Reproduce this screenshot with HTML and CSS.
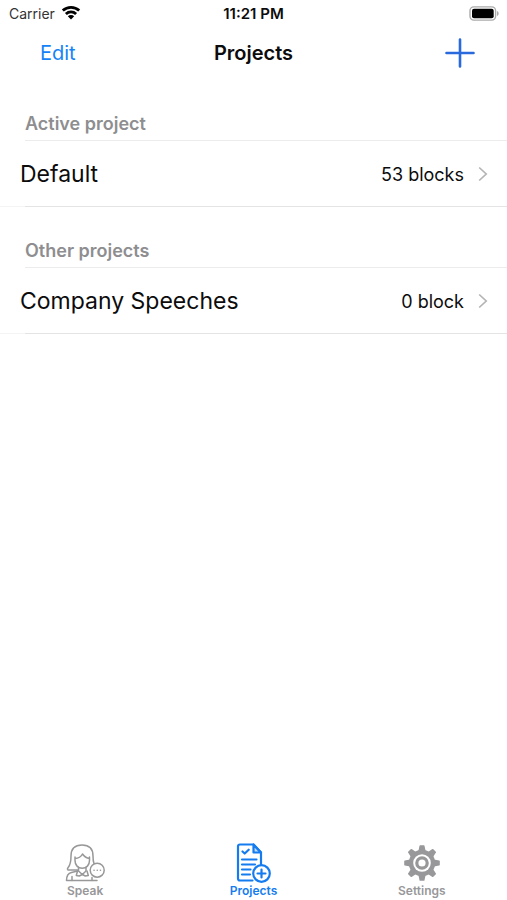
FILE: index.html
```html
<!DOCTYPE html>
<html lang="en">
<head>
<meta charset="utf-8">
<meta name="viewport" content="width=device-width, initial-scale=1">
<title>Projects</title>
<link rel="stylesheet" href="styles.css">
</head>
<body>
<div class="status">
  <div class="carrier">
    <span>Carrier</span>
    <svg width="20" height="15" viewBox="0 0 20 15" fill="none" stroke="#000" stroke-width="2.800" aria-hidden="true">
      <path d="M1.800 5.600a11.800 11.800 0 0 1 16.400 0M4.900 9a7.400 7.400 0 0 1 10.200 0"/>
      <path d="M10 14.500 6.800 11.300a4.500 4.500 0 0 1 6.400 0z" fill="#000" stroke="none"/>
    </svg>
  </div>
  <time class="clock">11:21 PM</time>
  <svg class="battery" width="30" height="15" viewBox="1 0 30 15" aria-hidden="true">
    <rect x="2" y=".9" width="25.600" height="13.200" rx="3.800" fill="#fff" stroke="#aaa" stroke-width="1.400"/>
    <rect x="4" y="2.800" width="21.700" height="9.400" rx="2" fill="#000"/>
    <path d="M29 5v5c2.200-.8 2.200-4.200 0-5z" fill="#aaa"/>
  </svg>
</div>
<header class="nav">
  <button class="edit" type="button">Edit</button>
  <h1>Projects</h1>
  <button class="add" type="button" aria-label="Add project">
    <svg width="30" height="30" viewBox="0 0 30 30" fill="none" stroke="#2869de" stroke-width="2.600" stroke-linecap="round"><path d="M15 1.500v27M1.500 15h27"/></svg>
  </button>
</header>
<main>
  <section>
    <h2>Active project</h2>
    <a class="row" href="#default">
      <span class="name">Default</span>
      <span class="count">53 blocks</span>
      <svg width="10" height="16" viewBox="0 0 10 16" fill="none" stroke="#b4b4b6" stroke-width="1.700" aria-hidden="true"><path d="M1.200 1.500 8.200 8l-7 6.500"/></svg>
    </a>
  </section>
  <section>
    <h2>Other projects</h2>
    <a class="row" href="#company-speeches">
      <span class="name">Company Speeches</span>
      <span class="count">0 block</span>
      <svg width="10" height="16" viewBox="0 0 10 16" fill="none" stroke="#b4b4b6" stroke-width="1.700" aria-hidden="true"><path d="M1.200 1.500 8.200 8l-7 6.500"/></svg>
    </a>
  </section>
</main>
<nav class="tabs">
  <a href="#speak">
    <svg width="40" height="40" viewBox="0 0 40 40" fill="none" stroke="currentColor" stroke-width="1.500" stroke-linejoin="round" stroke-linecap="round" aria-hidden="true">
      <path d="M12.500 27H3.500c-1.200 0-1.300-1.200-.5-2.200 2.600-3 3-6.300 3-11.800C6 6 10 2 17 2s11 4 11 11c0 3 .2 5.500 1 7.500"/>
      <path d="M10 15.500c3.500-.3 6-1.800 7.500-4.500 1.700 2.600 4 4 7 4.500M10 14v3.500c0 4.600 3 7.800 7.200 7.800s7.300-3.200 7.300-7.800V14"/>
      <path d="M13.500 24.500V28l3.800 3.500L21 28v-3.500M12.500 28l-6 1.500c-3.300.8-5 3-5 8h30.500"/>
      <path d="m12.500 28-1.200 4.500 3 .5 3-1.500 3 1.500 3-.5L22 28M7 33.500v4M27 34.500v3"/>
      <circle cx="32.200" cy="27.200" r="7" fill="#fff"/>
      <path d="M29 27.200h.1M32.200 27.200h.1M35.400 27.200h.1"/>
    </svg>
    <span>Speak</span>
  </a>
  <a class="current" href="#projects" aria-current="page">
    <svg width="40" height="40" viewBox="0 0 40 40" fill="none" stroke="currentColor" stroke-width="2.200" stroke-linejoin="round" stroke-linecap="round" aria-hidden="true">
      <path d="M19.500 37.500H7a2 2 0 0 1-2-2v-32a2 2 0 0 1 2-2h13.500l7.500 8v12.500"/>
      <path d="M20.500 1.500v8H28z" fill="currentColor" fill-opacity=".25"/>
      <path d="m9.500 8.500 2.200 2 4-3.800M9 16.500h14.500M9 21.500h13M9 26.500h8.500M9 31.500h8"/>
      <circle cx="28.500" cy="30.500" r="8.300" fill="#fff"/>
      <path d="M28.500 26.500v8M24.500 30.500h8"/>
    </svg>
    <span>Projects</span>
  </a>
  <a href="#settings">
    <svg width="40" height="40" viewBox="0 0 40 40" aria-hidden="true">
      <g fill="currentColor">
        <circle cx="20" cy="20" r="13.200"/>
        <path id="tooth" d="M16.400 8 17.500 2.800q.1-.6.700-.6h3.600q.6 0 .7.600L23.600 8zM16.400 32l1.100 5.200q.1.600.7.600h3.600q.6 0 .7-.6L23.600 32z"/>
        <use href="#tooth" transform="rotate(45 20 20)"/>
        <use href="#tooth" transform="rotate(90 20 20)"/>
        <use href="#tooth" transform="rotate(135 20 20)"/>
      </g>
      <circle cx="20" cy="20" r="8.800" fill="#fff"/>
      <circle cx="20" cy="20" r="5.200" fill="none" stroke="currentColor" stroke-width="3.200"/>
    </svg>
    <span>Settings</span>
  </a>
</nav>
</body>
</html>
```
FILE: styles.css
```css
* { box-sizing: border-box; }
body {
  margin: 0;
  min-height: 100vh;
  display: flex;
  flex-direction: column;
  background: #fff;
  color: #0c0c0d;
  font-family: Inter, "Liberation Sans", sans-serif;
}
a { color: inherit; text-decoration: none; }
button {
  border: 0;
  padding: 0;
  background: none;
  font: inherit;
  display: flex;
}
.status, .nav {
  display: grid;
  grid-template-columns: 1fr auto 1fr;
  align-items: center;
}
.status {
  height: 27px;
  padding: 0 8px;
  font-size: 14px;
}
.carrier { display: flex; align-items: center; gap: 6px; padding-left: 1px; color: #333; }
.carrier svg { margin-bottom: 2px; }
.clock { font-size: 15px; font-weight: 600; }
.battery { justify-self: end; }
.nav {
  height: 51px;
  padding: 0 32px;
}
.edit { padding-left: 8px; font-size: 20px; color: #1583f7; }
.add { justify-self: end; }
h1 { margin: 0; font-size: 20px; font-weight: 600; }
h2 {
  margin: 0 0 0 25px;
  height: 61px;
  padding: 0 0 6px;
  display: flex;
  align-items: flex-end;
  border-bottom: 1px solid #ececed;
  font-size: 18px;
  line-height: 20px;
  font-weight: 600;
  color: #8e8e90;
}
main { padding-top: 2px; flex: 1; }
.row {
  height: 66px;
  padding: 0 19px 0 20px;
  display: flex;
  align-items: center;
  background: linear-gradient(to right, #f4f4f5 25px, #e4e4e6 25px) bottom / 100% 1px no-repeat;
}
.name { flex: 1; font-size: 23px; }
.count { font-size: 18px; margin-right: 14px; }
.tabs {
  display: grid;
  grid-template-columns: repeat(3, 1fr);
  padding: 0 1px 2px;
  color: #98989a;
}
.tabs a {
  display: flex;
  flex-direction: column;
  align-items: center;
  font-size: 12px;
  line-height: 15px;
  font-weight: 600;
}
.tabs .current { color: #157cf0; }
```
